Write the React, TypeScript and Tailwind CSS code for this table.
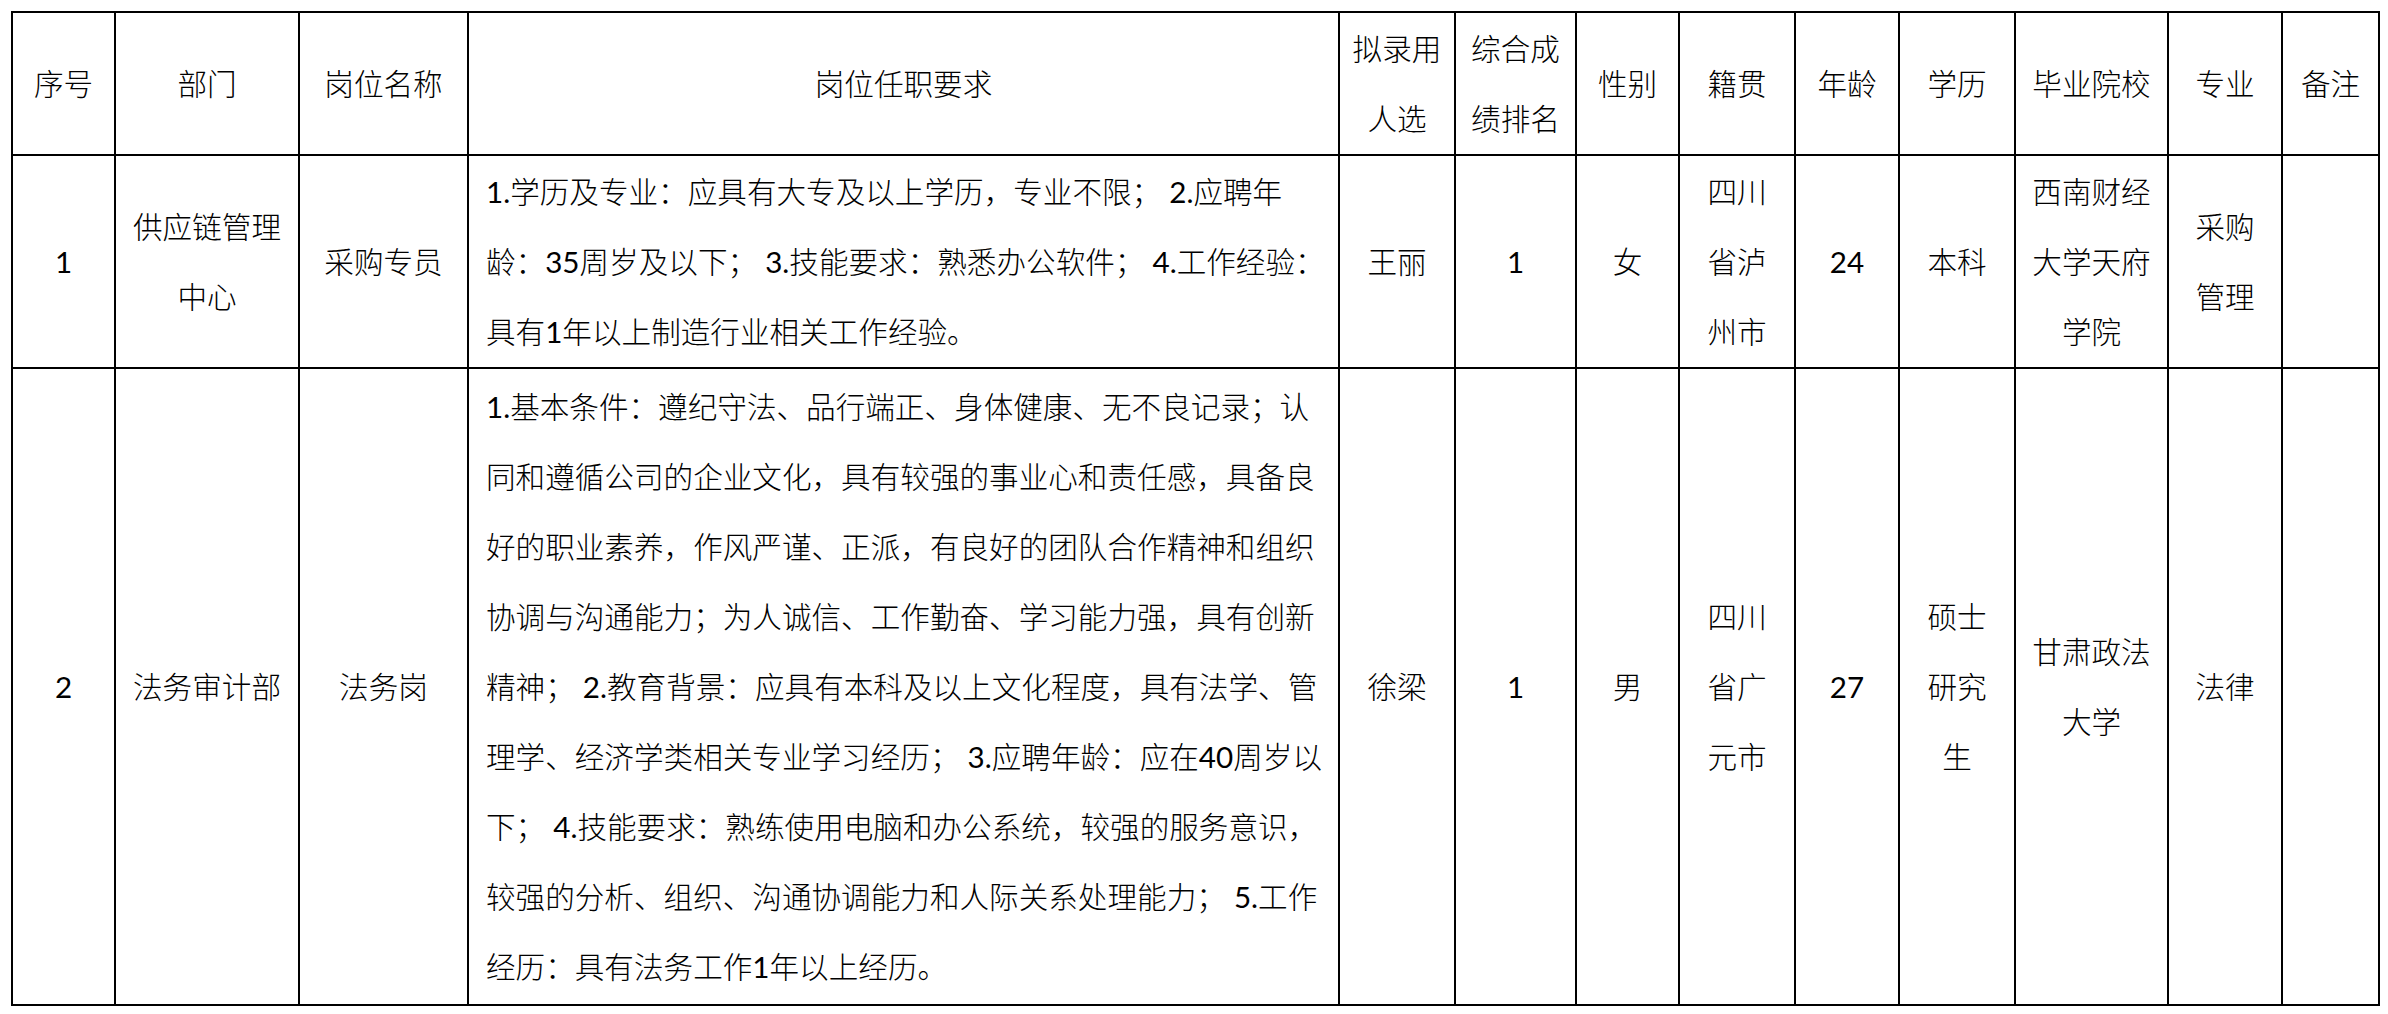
const cols = [103, 184, 169, 871, 116, 121, 103, 116, 104, 116, 153, 114, 97];

type Row = {
  no: string;
  dept: string[];
  post: string[];
  req: string[];
  name: string[];
  rank: string[];
  sex: string[];
  origin: string[];
  age: string[];
  edu: string[];
  school: string[];
  major: string[];
  note: string[];
  h: string;
};

const rows: Row[] = [
  {
    no: "1",
    dept: ["供应链管理", "中心"],
    post: ["采购专员"],
    req: [
      "1.学历及专业：应具有大专及以上学历，专业不限； 2.应聘年",
      "龄：35周岁及以下； 3.技能要求：熟悉办公软件； 4.工作经验：",
      "具有1年以上制造行业相关工作经验。",
    ],
    name: ["王丽"],
    rank: ["1"],
    sex: ["女"],
    origin: ["四川", "省泸", "州市"],
    age: ["24"],
    edu: ["本科"],
    school: ["西南财经", "大学天府", "学院"],
    major: ["采购", "管理"],
    note: [],
    h: "h-[213px]",
  },
  {
    no: "2",
    dept: ["法务审计部"],
    post: ["法务岗"],
    req: [
      "1.基本条件：遵纪守法、品行端正、身体健康、无不良记录；认",
      "同和遵循公司的企业文化，具有较强的事业心和责任感，具备良",
      "好的职业素养，作风严谨、正派，有良好的团队合作精神和组织",
      "协调与沟通能力；为人诚信、工作勤奋、学习能力强，具有创新",
      "精神； 2.教育背景：应具有本科及以上文化程度，具有法学、管",
      "理学、经济学类相关专业学习经历； 3.应聘年龄：应在40周岁以",
      "下； 4.技能要求：熟练使用电脑和办公系统，较强的服务意识，",
      "较强的分析、组织、沟通协调能力和人际关系处理能力； 5.工作",
      "经历：具有法务工作1年以上经历。",
    ],
    name: ["徐梁"],
    rank: ["1"],
    sex: ["男"],
    origin: ["四川", "省广", "元市"],
    age: ["27"],
    edu: ["硕士", "研究", "生"],
    school: ["甘肃政法", "大学"],
    major: ["法律"],
    note: [],
    h: "h-[637px]",
  },
];

const headers: string[][] = [
  ["序号"],
  ["部门"],
  ["岗位名称"],
  ["岗位任职要求"],
  ["拟录用", "人选"],
  ["综合成", "绩排名"],
  ["性别"],
  ["籍贯"],
  ["年龄"],
  ["学历"],
  ["毕业院校"],
  ["专业"],
  ["备注"],
];

// digits render a bit darker than the cjk text in the original
function Line({ text }: { text: string }) {
  const parts = text.split(/([0-9.]+)/);
  return (
    <div className="whitespace-pre">
      {parts.map((p, i) =>
        /^[0-9.]+$/.test(p) ? (
          <span key={i} className="font-normal">
            {p}
          </span>
        ) : (
          p
        )
      )}
    </div>
  );
}

function Cell({ lines, left }: { lines: string[]; left?: boolean }) {
  return (
    <td
      className={
        left
          ? "border-2 border-black p-0 pl-[17px] align-middle text-left"
          : "border-2 border-black p-0 align-middle text-center"
      }
    >
      {lines.map((l, i) => (
        <Line key={i} text={l} />
      ))}
    </td>
  );
}

export default function App() {
  return (
    <main className="w-[2388px] h-[1014px] bg-white overflow-hidden pt-[11px] pl-[11px]">
      <table
        className="table-fixed border-collapse text-black text-[29.6px] font-light leading-[70px]"
        style={{ fontFamily: 'Lato, "Noto Sans CJK SC", sans-serif', width: 2369 }}
      >
        <colgroup>
          {cols.map((w, i) => (
            <col key={i} style={{ width: w }} />
          ))}
        </colgroup>
        <tbody>
          <tr className="h-[143px]">
            {headers.map((h, i) => (
              <Cell key={i} lines={h} />
            ))}
          </tr>
          {rows.map((r) => (
            <tr key={r.no} className={r.h}>
              <Cell lines={[r.no]} />
              <Cell lines={r.dept} />
              <Cell lines={r.post} />
              <Cell lines={r.req} left />
              <Cell lines={r.name} />
              <Cell lines={r.rank} />
              <Cell lines={r.sex} />
              <Cell lines={r.origin} />
              <Cell lines={r.age} />
              <Cell lines={r.edu} />
              <Cell lines={r.school} />
              <Cell lines={r.major} />
              <Cell lines={r.note} />
            </tr>
          ))}
        </tbody>
      </table>
    </main>
  );
}
